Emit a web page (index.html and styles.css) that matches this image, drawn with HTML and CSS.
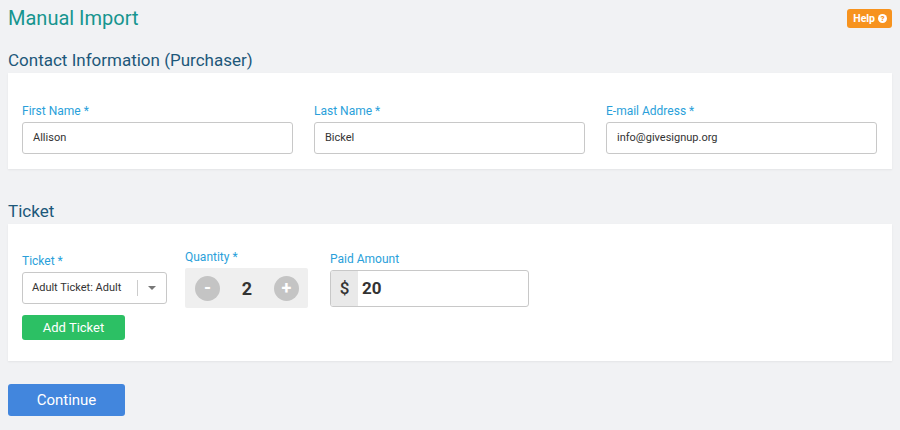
FILE: index.html
```html
<!DOCTYPE html>
<html lang="en">
<head>
    <meta charset="UTF-8">
    <meta name="viewport" content="width=device-width, initial-scale=1.0">
    <title>Manual Import</title>
    <link rel="stylesheet" href="styles.css">
</head>
<body>
    <div class="page">
        <div class="top">
            <h1 class="title">Manual Import</h1>
            <a class="help">Help <span class="help-icon">?</span></a>
        </div>

        <h2 class="section">Contact Information (Purchaser)</h2>
        <div class="card contact">
            <div class="field">
                <label>First Name *</label>
                <div class="input">Allison</div>
            </div>
            <div class="field">
                <label>Last Name *</label>
                <div class="input">Bickel</div>
            </div>
            <div class="field">
                <label>E-mail Address *</label>
                <div class="input">info@givesignup.org</div>
            </div>
        </div>

        <h2 class="section ticket-head">Ticket</h2>
        <div class="card ticket">
            <div class="ticket-row">
                <div class="field">
                    <label>Ticket *</label>
                    <div class="select">
                        <span class="select-text">Adult Ticket: Adult</span>
                        <span class="select-arrow"></span>
                    </div>
                </div>
                <div class="field">
                    <label>Quantity *</label>
                    <div class="qty">
                        <span class="qty-btn">-</span>
                        <span class="qty-num">2</span>
                        <span class="qty-btn">+</span>
                    </div>
                </div>
                <div class="field">
                    <label>Paid Amount</label>
                    <div class="money">
                        <span class="money-sign">$</span>
                        <span class="money-val">20</span>
                    </div>
                </div>
            </div>
            <a class="btn-add">Add Ticket</a>
        </div>

        <a class="btn-continue">Continue</a>
    </div>
</body>
</html>
```

FILE: styles.css
```css
body, div, h1, h2, label, a, span{
    margin: 0;
    padding: 0;
}
body{
    background: #f1f2f4;
    font-family: Roboto, "Liberation Sans", Arial, sans-serif;
    color: #333;
}
.page{
    padding: 6px 8px 8px 8px;
}
.top{
    display: flex;
    justify-content: space-between;
    align-items: flex-start;
}
.title{
    font-size: 20px;
    font-weight: 400;
    line-height: 24px;
    color: #17958f;
}
.help{
    margin-top: 3px;
    display: flex;
    align-items: center;
    gap: 3px;
    height: 19px;
    padding: 0 5px 0 6px;
    background: #f7931e;
    border-radius: 3px;
    color: #fff;
    font-size: 10.5px;
    font-weight: 700;
}
.help-icon{
    display: inline-block;
    width: 9px;
    height: 9px;
    border-radius: 50%;
    background: #fff;
    color: #f7931e;
    font-size: 8px;
    line-height: 9px;
    text-align: center;
    font-weight: 900;
}
.section{
    margin-top: 20px;
    font-size: 17px;
    font-weight: 400;
    line-height: 20px;
    color: #1d587a;
}
.ticket-head{
    margin-top: 32px;
}
.card{
    margin-top: 3px;
    background: #fff;
    box-shadow: 0 1px 2px rgba(0, 0, 0, 0.06);
}
.contact{
    display: grid;
    grid-template-columns: 1fr 1fr 1fr;
    column-gap: 21px;
    padding: 31px 15px 15px 14px;
}
.field label{
    display: block;
    font-size: 12px;
    line-height: 14px;
    color: #2a9fda;
    margin-bottom: 4px;
}
.input{
    height: 30px;
    border: 1px solid #c8c8c8;
    border-radius: 3px;
    padding: 0 10px;
    font-size: 11px;
    line-height: 30px;
    color: #333;
}
.ticket{
    padding: 26px 14px 21px 14px;
}
.ticket-row{
    display: flex;
    align-items: center;
    gap: 18px;
}
.ticket-row .field:nth-child(3){
    margin-left: 4px;
}
.select{
    width: 143px;
    height: 30px;
    border: 1px solid #c8c8c8;
    border-radius: 3px;
    display: flex;
    align-items: center;
    font-size: 11px;
    color: #333;
}
.select-text{
    flex: 1;
    padding-left: 9px;
    border-right: 1px solid #ccc;
    line-height: 16px;
}
.select-arrow{
    width: 0;
    height: 0;
    margin: 0 10px 0 10px;
    border-left: 4px solid transparent;
    border-right: 4px solid transparent;
    border-top: 4px solid #777;
}
.qty{
    width: 123px;
    height: 40px;
    background: #efefef;
    border-radius: 2px;
    display: flex;
    align-items: center;
    justify-content: space-between;
    padding: 0 9px 0 10px;
    box-sizing: border-box;
}
.qty-btn{
    width: 25px;
    height: 25px;
    border-radius: 50%;
    background: #c4c4c4;
    color: #fff;
    font-size: 18px;
    font-weight: 700;
    line-height: 24px;
    text-align: center;
}
.qty-num{
    font-size: 18px;
    font-weight: 700;
    color: #333;
}
.money{
    width: 197px;
    height: 35px;
    border: 1px solid #c8c8c8;
    border-radius: 3px;
    display: flex;
    overflow: hidden;
}
.money-sign{
    width: 27px;
    background: #e9e9e9;
    text-align: center;
    font-size: 17px;
    font-weight: 500;
    line-height: 35px;
    color: #333;
}
.money-val{
    padding-left: 4px;
    font-size: 17px;
    font-weight: 700;
    line-height: 35px;
    color: #333;
}
.btn-add{
    display: block;
    width: 103px;
    height: 25px;
    margin-top: 7px;
    background: #2cc064;
    border-radius: 3px;
    color: #fff;
    font-size: 13px;
    line-height: 25px;
    text-align: center;
}
.btn-continue{
    display: block;
    width: 117px;
    height: 32px;
    margin-top: 23px;
    background: #4286dd;
    border-radius: 3px;
    color: #fff;
    font-size: 15px;
    line-height: 32px;
    text-align: center;
}
```
